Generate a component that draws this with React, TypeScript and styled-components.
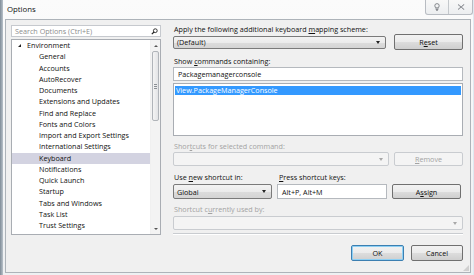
import React from "react";
import styled, { createGlobalStyle, css } from "styled-components";

const Global = createGlobalStyle`
  html, body { margin: 0; padding: 0; }
  body {
    width: 474px; height: 275px; overflow: hidden;
    font-family: "Open Sans", "Noto Sans", sans-serif;
    font-size: 7.2px;
    color: #101010;
    background: #9aa6b1;
  }
  u { text-decoration: underline; text-underline-offset: 1px; }
`;

const Desktop = styled.div`
  width: 474px;
  height: 275px;
  display: flex;
  background: linear-gradient(90deg, #7f8c98 0px, #b9c2ca 3px, #dfe9f1 100%);
`;

const Window = styled.div`
  margin-left: 3px;
  width: 470px;
  height: 275px;
  display: flex;
  flex-direction: column;
  background: linear-gradient(180deg, #fbfbfb 0%, #eef0f2 100%);
  box-sizing: border-box;
`;

const TitleBar = styled.div`
  height: 19px;
  display: flex;
  align-items: flex-start;
  justify-content: space-between;
  flex: none;
`;

const Title = styled.div`
  font-size: 7.8px;
  margin: 4px 0 0 4px;
  line-height: 10px;
  color: #111;
`;

const Caption = styled.div`
  display: flex;
  height: 14px;
  border: 1px solid #b8bcc2;
  border-top: none;
  border-radius: 0 0 3px 3px;
  background: linear-gradient(180deg, #f8f8f8, #eceef0);
  overflow: hidden;
`;

const CapBtn = styled.div<{ $w: number; $divider?: boolean }>`
  width: ${(p) => p.$w}px;
  display: flex;
  align-items: center;
  justify-content: center;
  ${(p) => p.$divider && css`border-right: 1px solid #c4c8cc;`}
`;

const Client = styled.div`
  flex: 1;
  margin: 0 0 2px 2px;
  width: 466px;
  box-sizing: border-box;
  border: 1px solid #adb3b9;
  background: #f0f0f0;
  display: flex;
  flex-direction: column;
  padding: 4px 7px 0 5px;
  position: relative;
`;

const Main = styled.div`
  display: flex;
  gap: 12px;
  height: 211px;
  flex: none;
`;

const LeftCol = styled.div`
  width: 150px;
  display: flex;
  flex-direction: column;
  padding-top: 1px;
`;

const Search = styled.div`
  height: 12px;
  box-sizing: border-box;
  border: 1px solid #c6c9ce;
  background: #fff;
  display: flex;
  align-items: center;
  justify-content: space-between;
  padding: 0 2px 0 3px;
  color: #8d8d8d;
  line-height: 10px;
`;

const Tree = styled.div`
  margin-top: 2px;
  height: 196px;
  box-sizing: border-box;
  border: 1px solid #a9adb3;
  background: #fff;
  display: flex;
  overflow: hidden;
`;

const TreeList = styled.div`
  flex: 1;
  display: flex;
  flex-direction: column;
`;

const TreeRow = styled.div<{ $level: number; $selected?: boolean }>`
  height: 11.25px;
  flex: none;
  display: flex;
  align-items: center;
  padding-left: ${(p) => (p.$level === 0 ? 6 : 27)}px;
  line-height: 11px;
  white-space: nowrap;
  ${(p) => p.$selected && css`background: #d3d3e1;`}
`;

const Expander = styled.span`
  width: 0;
  height: 0;
  border-left: 3px solid transparent;
  border-bottom: 3px solid #222;
  margin-right: 6px;
  display: inline-block;
`;

const ScrollBar = styled.div`
  width: 9px;
  flex: none;
  background: #f3f3f3;
  display: flex;
  flex-direction: column;
  align-items: center;
  border-left: 1px solid #f0f0f0;
`;

const Arrow = styled.div<{ $down?: boolean }>`
  height: 11px;
  flex: none;
  display: flex;
  align-items: center;
  justify-content: center;
  &::after {
    content: "";
    border-left: 2px solid transparent;
    border-right: 2px solid transparent;
    ${(p) =>
      p.$down
        ? css`border-top: 2px solid #555;`
        : css`border-bottom: 2px solid #555;`}
  }
`;

const Thumb = styled.div`
  width: 7px;
  height: 70px;
  box-sizing: border-box;
  border: 1px solid #b0b4b9;
  border-radius: 2px;
  background: linear-gradient(90deg, #f4f4f4, #e3e4e6);
  display: flex;
  flex-direction: column;
  align-items: center;
  justify-content: center;
  gap: 1px;
`;

const Grip = styled.div`
  width: 3px;
  height: 1px;
  background: #8b8f94;
`;

const Spacer = styled.div`
  flex: 1;
`;

const RightCol = styled.div`
  flex: 1;
  display: flex;
  flex-direction: column;
`;

const Label = styled.div<{ $disabled?: boolean; $mt: number; $w?: number }>`
  height: 10px;
  line-height: 10px;
  margin-top: ${(p) => p.$mt}px;
  padding-left: 1px;
  white-space: nowrap;
  ${(p) => p.$w && css`width: ${p.$w}px;`}
  color: ${(p) => (p.$disabled ? "#a3a3a3" : "#101010")};
`;

const Row = styled.div<{ $mt: number; $h: number; $gap?: number }>`
  display: flex;
  align-items: center;
  gap: ${(p) => p.$gap ?? 5}px;
  margin-top: ${(p) => p.$mt}px;
  height: ${(p) => p.$h}px;
`;

const Combo = styled.div<{ $disabled?: boolean; $w?: number; $h: number }>`
  ${(p) => (p.$w ? css`width: ${p.$w}px;` : css`flex: 1;`)}
  height: ${(p) => p.$h}px;
  box-sizing: border-box;
  border-radius: 2px;
  display: flex;
  align-items: center;
  padding: 0 5px 0 3px;
  line-height: 10px;
  ${(p) =>
    p.$disabled
      ? css`
          border: 1px solid #c9ccd0;
          background: #f4f4f4;
          &::after { border-top-color: #a8a8a8; }
        `
      : css`
          border: 1px solid #7a7a7a;
          background: linear-gradient(180deg, #f3f3f3 0%, #ebebeb 50%, #dcdcdc 51%, #d4d4d4 100%);
          &::after { border-top-color: #222; }
        `}
  &::after {
    content: "";
    margin-left: auto;
    border-left: 2px solid transparent;
    border-right: 2px solid transparent;
    border-top-width: 3px;
    border-top-style: solid;
  }
`;

const Button = styled.div<{ $disabled?: boolean; $w: number; $h: number; $default?: boolean }>`
  width: ${(p) => p.$w}px;
  height: ${(p) => p.$h}px;
  flex: none;
  box-sizing: border-box;
  border-radius: 2px;
  display: flex;
  align-items: center;
  justify-content: center;
  line-height: 10px;
  ${(p) =>
    p.$disabled
      ? css`
          border: 1px solid #c9ccd0;
          background: #f4f4f4;
          color: #a3a3a3;
        `
      : css`
          border: 1px solid ${p.$default ? "#3c7fb1" : "#707070"};
          background: linear-gradient(180deg, #f2f2f2 0%, #ebebeb 50%, #dddddd 51%, #cfcfcf 100%);
          ${p.$default && css`box-shadow: inset 0 0 0 1px #8ed0f4;`}
        `}
`;

const TextInput = styled.div<{ $w?: number; $h: number }>`
  ${(p) => (p.$w ? css`width: ${p.$w}px;` : css`flex: 1;`)}
  height: ${(p) => p.$h}px;
  flex-shrink: 0;
  box-sizing: border-box;
  border: 1px solid #b5b9be;
  background: #fff;
  display: flex;
  align-items: center;
  padding-left: 4px;
  line-height: 10px;
`;

const ListBox = styled.div`
  margin-top: 2px;
  height: 54px;
  box-sizing: border-box;
  border: 1px solid #a9adb3;
  background: #fff;
  padding: 2px 1px;
`;

const ListItem = styled.div<{ $selected?: boolean }>`
  height: 9px;
  line-height: 9px;
  padding-left: 1px;
  ${(p) => p.$selected && css`background: #3399ff; color: #fff;`}
`;

const Separator = styled.div`
  margin-top: 3px;
  height: 1px;
  background: #c9ccd0;
  border-bottom: 1px solid #fff;
`;

const Footer = styled.div`
  display: flex;
  justify-content: flex-end;
  gap: 7px;
  padding-top: 10px;
`;

const Gripper = styled.div`
  position: absolute;
  right: 1px;
  bottom: 1px;
  width: 6px;
  height: 6px;
  background: radial-gradient(circle, #a9a9a9 0.6px, transparent 0.8px) 0 0 / 2px 2px;
  clip-path: polygon(100% 0, 100% 100%, 0 100%);
`;

const treeItems = [
  "General",
  "Accounts",
  "AutoRecover",
  "Documents",
  "Extensions and Updates",
  "Find and Replace",
  "Fonts and Colors",
  "Import and Export Settings",
  "International Settings",
  "Keyboard",
  "Notifications",
  "Quick Launch",
  "Startup",
  "Tabs and Windows",
  "Task List",
  "Trust Settings",
  "Web Browser",
];

export default function App() {
  return (
    <>
      <Global />
      <Desktop>
        <Window>
          <TitleBar>
            <Title>Options</Title>
            <Caption>
              <CapBtn $w={22} $divider>
                <svg width="6" height="8" viewBox="0 0 6 8">
                  <circle cx="3" cy="2.8" r="2.2" fill="none" stroke="#6b6f74" strokeWidth="0.8" />
                  <path d="M2 5.2 L2 6.6 L4 6.6 L4 5.2" fill="none" stroke="#6b6f74" strokeWidth="0.8" />
                  <path d="M2.2 7.5 L3.8 7.5" stroke="#6b6f74" strokeWidth="0.7" />
                </svg>
              </CapBtn>
              <CapBtn $w={23}>
                <svg width="8" height="6" viewBox="0 0 8 6">
                  <path d="M1 0.5 L7 5.5 M7 0.5 L1 5.5" stroke="#7a7e83" strokeWidth="1" />
                  <path d="M1.6 0.5 L7.6 5.5 M7.6 0.5 L1.6 5.5" stroke="#b0b3b7" strokeWidth="0.5" />
                </svg>
              </CapBtn>
            </Caption>
          </TitleBar>
          <Client>
            <Main>
              <LeftCol>
                <Search>
                  <span>Search Options (Ctrl+E)</span>
                  <svg width="7" height="7" viewBox="0 0 7 7">
                    <circle cx="4.3" cy="2.7" r="1.9" fill="none" stroke="#222" strokeWidth="0.9" />
                    <path d="M3 4 L0.8 6.2" stroke="#222" strokeWidth="1.2" />
                  </svg>
                </Search>
                <Tree>
                  <TreeList>
                    <TreeRow $level={0}>
                      <Expander />
                      Environment
                    </TreeRow>
                    {treeItems.map((t) => (
                      <TreeRow key={t} $level={1} $selected={t === "Keyboard"}>
                        {t}
                      </TreeRow>
                    ))}
                  </TreeList>
                  <ScrollBar>
                    <Arrow />
                    <Thumb>
                      <Grip />
                      <Grip />
                      <Grip />
                    </Thumb>
                    <Spacer />
                    <Arrow $down />
                  </ScrollBar>
                </Tree>
              </LeftCol>
              <RightCol>
                <Label $mt={0}>
                  Apply the following additional keyboard <u>m</u>apping scheme:
                </Label>
                <Row $mt={0} $h={16} $gap={8}>
                  <Combo $h={13}>(Default)</Combo>
                  <Button $w={69} $h={16}>
                    R<u>e</u>set
                  </Button>
                </Row>
                <Label $mt={6}>
                  Show <u>c</u>ommands containing:
                </Label>
                <Row $mt={1} $h={14}>
                  <TextInput $h={14}>Packagemanagerconsole</TextInput>
                </Row>
                <ListBox>
                  <ListItem $selected>View.PackageManagerConsole</ListItem>
                </ListBox>
                <Label $mt={5} $disabled>
                  Shor<u>t</u>cuts for selected command:
                </Label>
                <Row $mt={1} $h={14}>
                  <Combo $h={14} $disabled />
                  <Button $w={69} $h={14} $disabled>
                    <u>R</u>emove
                  </Button>
                </Row>
                <Row $mt={6} $h={10}>
                  <Label $mt={0} $w={99}>
                    Use <u>n</u>ew shortcut in:
                  </Label>
                  <Label $mt={0}>
                    <u>P</u>ress shortcut keys:
                  </Label>
                </Row>
                <Row $mt={2} $h={15}>
                  <Combo $w={99} $h={15}>
                    Global
                  </Combo>
                  <TextInput $w={110} $h={15}>
                    Alt+P, Alt+M
                  </TextInput>
                  <Button $w={69} $h={15}>
                    A<u>s</u>sign
                  </Button>
                </Row>
                <Label $mt={5} $disabled>
                  Shortcut c<u>u</u>rrently used by:
                </Label>
                <Row $mt={2} $h={14}>
                  <Combo $h={14} $disabled />
                </Row>
                <Separator />
              </RightCol>
            </Main>
            <Footer>
              <Button $w={53} $h={16} $default>
                OK
              </Button>
              <Button $w={52} $h={16}>
                Cancel
              </Button>
            </Footer>
            <Gripper />
          </Client>
        </Window>
      </Desktop>
    </>
  );
}
